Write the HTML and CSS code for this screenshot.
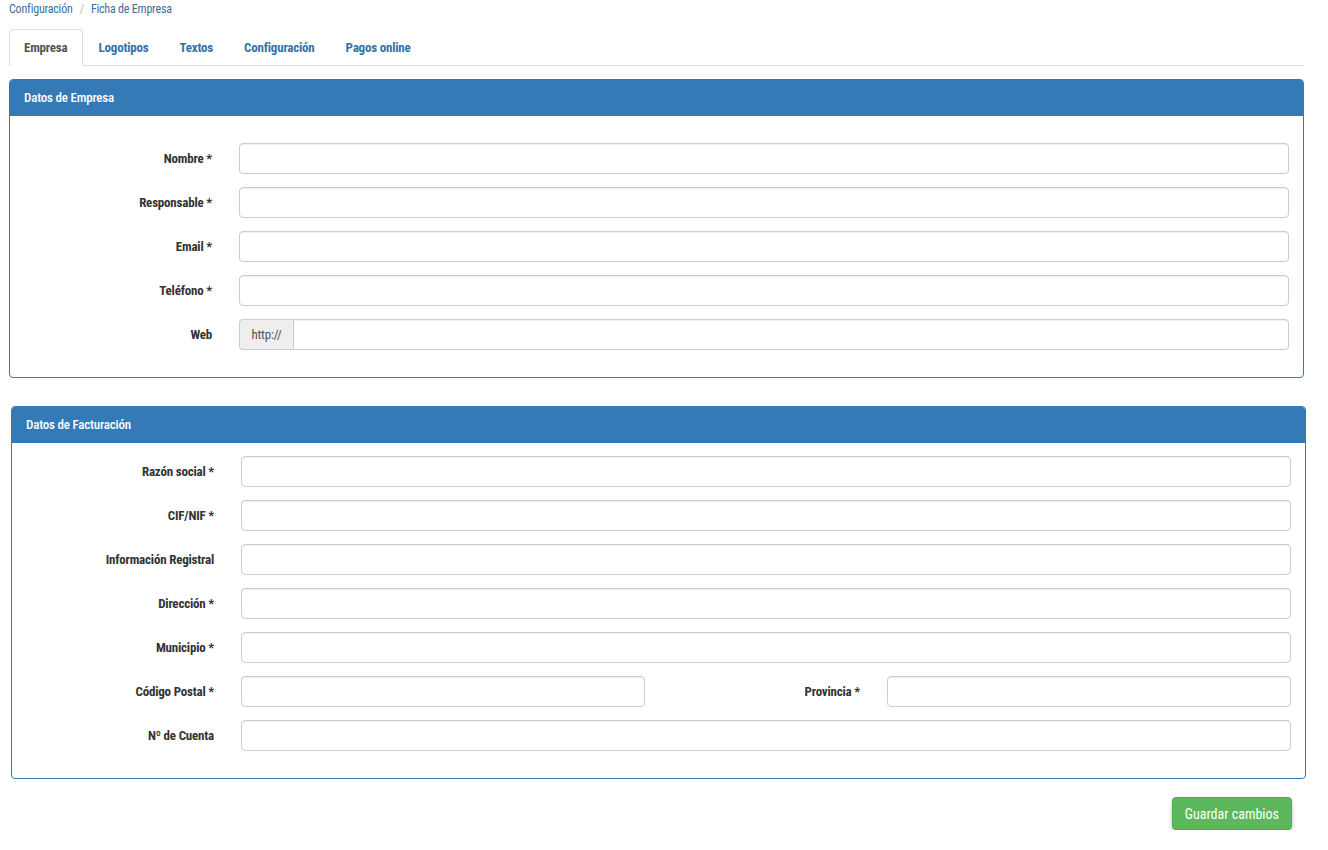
FILE: index.html
```html
<!DOCTYPE html>
<html lang="es">
<head>
    <meta charset="UTF-8">
    <title>Ficha de Empresa</title>
    <link rel="stylesheet" href="styles.css">
</head>
<body>
<div class="page">

    <!-- Breadcrumb -->
    <ol class="breadcrumb">
        <li><a href="#">Configuración</a></li>
        <li class="sep">/</li>
        <li class="active">Ficha de Empresa</li>
    </ol>

    <!-- Tabs -->
    <ul class="tabs">
        <li class="active"><a href="#">Empresa</a></li>
        <li><a href="#">Logotipos</a></li>
        <li><a href="#">Textos</a></li>
        <li><a href="#">Configuración</a></li>
        <li><a href="#">Pagos online</a></li>
    </ul>

    <!-- Datos de Empresa -->
    <div class="panel">
        <div class="panel-heading">Datos de Empresa</div>
        <div class="panel-body">
            <div class="form-row"><label>Nombre *</label><input type="text"></div>
            <div class="form-row"><label>Responsable *</label><input type="text"></div>
            <div class="form-row"><label>Email *</label><input type="text"></div>
            <div class="form-row"><label>Teléfono *</label><input type="text"></div>
            <div class="form-row">
                <label>Web</label>
                <div class="input-group">
                    <span class="addon">http://</span>
                    <input type="text">
                </div>
            </div>
        </div>
    </div>

    <!-- Datos de Facturación -->
    <div class="panel panel-billing">
        <div class="panel-heading">Datos de Facturación</div>
        <div class="panel-body">
            <div class="form-row"><label>Razón social *</label><input type="text"></div>
            <div class="form-row"><label>CIF/NIF *</label><input type="text"></div>
            <div class="form-row"><label>Información Registral</label><input type="text"></div>
            <div class="form-row"><label>Dirección *</label><input type="text"></div>
            <div class="form-row"><label>Municipio *</label><input type="text"></div>
            <div class="form-row">
                <label>Código Postal *</label><input type="text">
                <label class="label-inline">Provincia *</label><input type="text">
            </div>
            <div class="form-row"><label>Nº de Cuenta</label><input type="text"></div>
        </div>
    </div>

    <div class="actions">
        <button class="btn-save" type="button">Guardar cambios</button>
    </div>

</div>
</body>
</html>
```

FILE: styles.css
```css
* { margin: 0; padding: 0; box-sizing: border-box; }
body {
    background: #fff;
    font-family: "Roboto Condensed", Roboto, "Liberation Sans Narrow", sans-serif;
    font-stretch: 75%;
    font-size: 13px;
    letter-spacing: -0.2px;
    color: #333;
}
.page {
    width: 1304px;
    padding-left: 9px;
}

/* Breadcrumb */
.breadcrumb {
    list-style: none;
    display: flex;
    gap: 7px;
    height: 18px;
    line-height: 18px;
    font-size: 12px;
    margin-bottom: 11px;
}
.breadcrumb a { color: #3a6f9f; text-decoration: none; }
.breadcrumb .sep { color: #bbb; }
.breadcrumb .active { color: #3a6f9f; }

/* Tabs */
.tabs {
    list-style: none;
    display: flex;
    border-bottom: 1px solid #ddd;
    margin-bottom: 13px;
}
.tabs li { margin-right: 1px; margin-bottom: -1px; }
.tabs a {
    display: block;
    padding: 9px 14px;
    line-height: 17px;
    border: 1px solid transparent;
    border-radius: 4px 4px 0 0;
    font-weight: bold;
    color: #3572a8;
    text-decoration: none;
}
.tabs .active a {
    color: #555;
    background: #fff;
    border-color: #ddd #ddd transparent;
}

/* Panels */
.panel {
    border: 1px solid #337ab7;
    border-radius: 4px;
    background: #fff;
    margin-bottom: 28px;
}
.panel-heading {
    background: #337ab7;
    color: #fff;
    height: 36px;
    line-height: 36px;
    padding-left: 14px;
    font-weight: 500;
    font-size: 13px;
    border-radius: 3px 3px 0 0;
}
.panel-body {
    padding: 27px 14px 27px 0;
}
.panel-billing {
    margin-left: 2px;
    margin-right: -2px;
    margin-bottom: 18px;
}
.panel-billing .panel-body { padding-top: 13px; }

/* Form rows */
.form-row {
    display: flex;
    align-items: center;
    height: 31px;
    margin-bottom: 13px;
}
.form-row:last-child { margin-bottom: 0; }
.form-row label {
    width: 202px;
    flex: none;
    margin-right: 27px;
    text-align: right;
    font-weight: bold;
    color: #333;
}
.form-row label.label-inline { width: 215px; }
.form-row input {
    flex: 1;
    min-width: 0;
    height: 31px;
    border: 1px solid #ccc;
    border-radius: 4px;
    box-shadow: inset 0 1px 1px rgba(0, 0, 0, 0.075);
    padding: 6px 12px;
    font: inherit;
    font-weight: normal;
}
.input-group {
    flex: 1;
    display: flex;
    height: 31px;
}
.addon {
    width: 54px;
    flex: none;
    background: #eee;
    border: 1px solid #ccc;
    border-right: none;
    border-radius: 4px 0 0 4px;
    color: #555;
    line-height: 29px;
    text-align: center;
}
.input-group input { border-radius: 0 4px 4px 0; }

/* Save button */
.actions {
    display: flex;
    justify-content: flex-end;
    padding-right: 12px;
}
.btn-save {
    height: 33px;
    padding: 0 12px;
    background: #5cb85c;
    border: 1px solid #4cae4c;
    border-radius: 4px;
    color: #fff;
    font: inherit;
    font-size: 14px;
    box-shadow: 0 2px 4px rgba(0, 0, 0, 0.25);
    cursor: pointer;
}
```
